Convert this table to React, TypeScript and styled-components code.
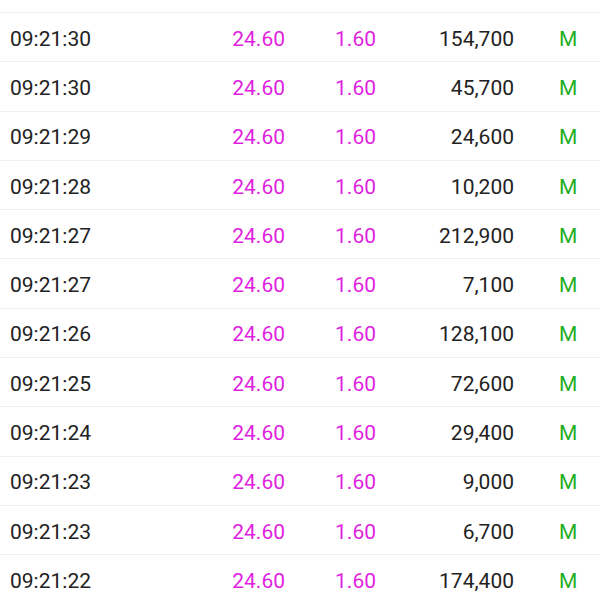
import React from "react";
import styled, { createGlobalStyle } from "styled-components";

const Global = createGlobalStyle`
  html, body { margin: 0; padding: 0; background: #ffffff; }
  body { font-family: Roboto, "Noto Sans", sans-serif; }
`;

const Page = styled.div`
  width: 600px;
  height: 600px;
  overflow: hidden;
  background: #ffffff;
`;

const List = styled.div`
  display: flex;
  flex-direction: column;
  margin-top: -36.3px;
`;

const Row = styled.div`
  display: grid;
  grid-template-columns: 190px 85px 91px 138px 86px;
  align-items: center;
  box-sizing: border-box;
  height: 49.3px;
  padding: 4px 0 0 10px;
  border-bottom: 1px solid #efefef;
  font-size: 21px;
  line-height: 1;
`;

const Time = styled.span`
  color: #222222;
  text-align: left;
`;

const Num = styled.span<{ $tone?: "up" | "plain" }>`
  color: ${(p) => (p.$tone === "up" ? "#e01fe0" : "#222222")};
  text-align: right;
`;

const Flag = styled.span`
  color: #1fae1f;
  padding-left: 45px;
`;

const rows = [
  ["09:21:31", "45,700"],
  ["09:21:30", "154,700"],
  ["09:21:30", "45,700"],
  ["09:21:29", "24,600"],
  ["09:21:28", "10,200"],
  ["09:21:27", "212,900"],
  ["09:21:27", "7,100"],
  ["09:21:26", "128,100"],
  ["09:21:25", "72,600"],
  ["09:21:24", "29,400"],
  ["09:21:23", "9,000"],
  ["09:21:23", "6,700"],
  ["09:21:22", "174,400"],
];

export default function App() {
  return (
    <Page>
      <Global />
      <List>
        {rows.map(([t, v], i) => (
          <Row key={i}>
            <Time>{t}</Time>
            <Num $tone="up">24.60</Num>
            <Num $tone="up">1.60</Num>
            <Num>{v}</Num>
            <Flag>M</Flag>
          </Row>
        ))}
      </List>
    </Page>
  );
}
